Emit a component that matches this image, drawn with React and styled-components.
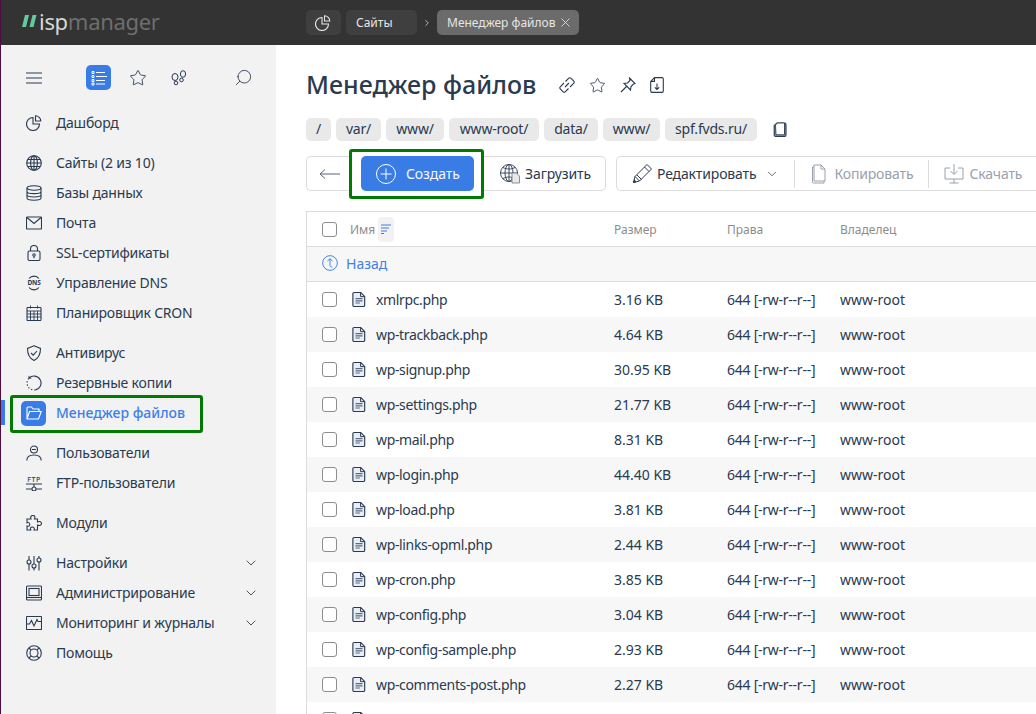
import React from 'react'
import styled, { createGlobalStyle } from 'styled-components'
import { ChevronDown, ChevronRight, X, Star, Search } from 'lucide-react'

const Global = createGlobalStyle`
  html, body { margin: 0; padding: 0; height: 100%; overflow: hidden; background: #fff; }
  body { font-family: "Noto Sans", "Open Sans", sans-serif; color: #2a3a50; }
`

const Page = styled.div`
  width: 1036px;
  height: 714px;
  overflow: hidden;
  display: flex;
  flex-direction: column;
  border-left: 1px solid #4c0f3c;
  box-sizing: border-box;
`

const Top = styled.header`
  height: 45px;
  flex: none;
  background: #333333;
  display: flex;
  align-items: center;
`

const Logo = styled.div`
  width: 305px;
  padding: 0 0 3px 21px;
  box-sizing: border-box;
  display: flex;
  align-items: center;
  gap: 2px;
  font-size: 22px;
  line-height: 1;
  letter-spacing: -0.3px;
  color: #d8d8d8;
  span { color: #6e6e6e; }
`

const TopTab = styled.div`
  height: 25px;
  border-radius: 5px;
  background: ${p => (p.$active ? '#6b6b6b' : '#3f3f3f')};
  color: #e6e6e6;
  font-size: 12px;
  white-space: nowrap;
  display: flex;
  align-items: center;
  justify-content: space-between;
  padding: 0 6px 0 10px;
  box-sizing: border-box;
  width: ${p => p.$w}px;
`

const Crumbs = styled.div`
  display: flex;
  align-items: center;
  gap: 5px;
  svg { flex: none; }
`

const CrumbArrow = styled.span`
  display: flex;
  color: #cfcfcf;
`

const Body = styled.div`
  flex: 1;
  display: flex;
  min-height: 0;
`

const Side = styled.aside`
  width: 275px;
  flex: none;
  background: #f2f2f2;
`

const SideTools = styled.div`
  height: 25px;
  margin-top: 20px;
  display: flex;
  align-items: center;
  color: #2a3a50;
  padding-left: 25px;
  svg { flex: none; }
`

const ToolCell = styled.div`
  width: ${p => p.$w}px;
  margin-left: ${p => p.$ml || 0}px;
  flex: none;
  display: flex;
  justify-content: center;
  align-items: center;
`

const ActiveTool = styled.div`
  width: 25px;
  height: 25px;
  margin-left: 44px;
  flex: none;
  border-radius: 5px;
  background: #3a7ce6;
  display: flex;
  align-items: center;
  justify-content: center;
`

const Nav = styled.nav`
  padding-top: 18px;
`

const NavGroup = styled.div`
  margin-bottom: 10px;
`

const NavRow = styled.div`
  height: 30px;
  display: flex;
  align-items: center;
  padding: 0 17px 0 25px;
  font-size: 14px;
  letter-spacing: ${p => (p.$active ? '0' : '-0.2px')};
  color: ${p => (p.$active ? '#3f7fe8' : '#2a3a50')};
  font-weight: ${p => (p.$active ? 500 : 400)};
  position: relative;
`

const NavLabel = styled.span`
  padding-bottom: 2px;
`

const NavIcon = styled.span`
  width: 16px;
  height: 16px;
  margin-right: 14px;
  flex: none;
  display: flex;
  align-items: center;
  justify-content: center;
`

const NavChevron = styled.span`
  margin-left: auto;
  display: flex;
  color: #2a3a50;
`

const ActiveBar = styled.span`
  position: absolute;
  left: 0;
  top: 2px;
  width: 4px;
  height: 25px;
  background: #3a7ce6;
`

const ActiveIcon = styled.span`
  width: 25px;
  height: 25px;
  border-radius: 5px;
  background: #3a7ce6;
  margin: 0 10px 0 -5px;
  flex: none;
  display: flex;
  align-items: center;
  justify-content: center;
`

const GreenBox = styled.span`
  position: absolute;
  left: 9px;
  top: -3px;
  width: 193px;
  height: 38px;
  border: 3px solid #007a00;
  border-radius: 3px;
  box-sizing: border-box;
`

const Main = styled.main`
  flex: 1;
  min-width: 0;
  padding: 0 0 0 30px;
  overflow: hidden;
`

const TitleRow = styled.div`
  height: 40px;
  margin-top: 20px;
  display: flex;
  align-items: center;
`

const Title = styled.h1`
  margin: 0 23px 3px 0;
  font-size: 25px;
  font-weight: 500;
  color: #2a3a50;
  white-space: nowrap;
`

const TitleIcons = styled.div`
  display: flex;
  gap: 14px;
  color: #2a3a50;
  align-items: center;
`

const Path = styled.div`
  display: flex;
  align-items: center;
  gap: 5px;
  margin-top: 13px;
  height: 23px;
`

const PathItem = styled.div`
  width: ${p => p.$w}px;
  height: 23px;
  box-sizing: border-box;
  padding-bottom: 2px;
  background: #e9e9e9;
  border-radius: 5px;
  font-size: 14px;
  letter-spacing: -0.2px;
  display: flex;
  align-items: center;
  justify-content: center;
  color: #2a3a50;
`

const CopyPath = styled.span`
  display: flex;
  margin-left: 11px;
`

const Toolbar = styled.div`
  margin-top: 15px;
  display: flex;
  height: 35px;
  align-items: center;
`

const Group = styled.div`
  border: 1px solid #dcdcdc;
  border-radius: 5px;
  height: 35px;
  box-sizing: border-box;
  display: flex;
  align-items: center;
  flex: none;
`

const BackBtn = styled(Group)`
  width: 50px;
  padding-left: 12px;
  border-right: none;
  border-radius: 5px 0 0 5px;
`

const Highlight = styled.div`
  width: 135px;
  height: 50px;
  box-sizing: border-box;
  border: 3px solid #007a00;
  border-radius: 3px;
  margin-left: -7px;
  padding-left: 9px;
  display: flex;
  align-items: center;
  flex: none;
  background: #fff;
`

const Primary = styled.div`
  width: 113px;
  height: 35px;
  border-radius: 5px;
  background: #3a7ce6;
  color: #f4f8ff;
  font-size: 14px;
  letter-spacing: -0.1px;
  display: flex;
  align-items: center;
  gap: 10px;
  padding-left: 15px;
  box-sizing: border-box;
`

const Upload = styled(Group)`
  width: 122px;
  padding-left: 16px;
  gap: 5px;
  font-size: 14px;
  letter-spacing: -0.1px;
  border-left: none;
  border-radius: 0 5px 5px 0;
`

const ActionGroup = styled(Group)`
  margin-left: 10px;
  flex: 1;
  border-right: none;
  border-radius: 5px 0 0 5px;
  font-size: 14px;
  letter-spacing: -0.15px;
  padding-left: 15px;
`

const Action = styled.div`
  display: flex;
  align-items: center;
  gap: ${p => p.$gap || 6}px;
  color: ${p => (p.$off ? '#9aa1ab' : '#2a3a50')};
  height: 100%;
`

const Sep = styled.div`
  width: 1px;
  height: 28px;
  background: #dcdcdc;
  margin: 0 ${p => p.$r || 15}px 0 ${p => p.$l || 15}px;
`

const Table = styled.div`
  margin-top: 20px;
  border-left: 1px solid #dcdcdc;
  border-top: 1px solid #dcdcdc;
`

const Columns = `
  display: grid;
  grid-template-columns: 307px 113px 113px 1fr;
  align-items: center;
`

const Head = styled.div`
  ${Columns}
  height: 34px;
  border-bottom: 1px solid #dcdcdc;
  font-size: 12px;
  color: #8d8d8d;
`

const NameHead = styled.div`
  display: flex;
  align-items: center;
  padding-left: 15px;
`

const SortBtn = styled.span`
  width: 16px;
  height: 25px;
  background: #f2f2f2;
  border-radius: 4px;
  display: flex;
  align-items: center;
  justify-content: center;
  margin-left: 3px;
`

const Check = styled.span`
  width: 15px;
  height: 15px;
  box-sizing: border-box;
  border: 1px solid #8d8d8d;
  border-radius: 3px;
  background: #fff;
  flex: none;
  margin-right: ${p => p.$mr}px;
`

const Back = styled.div`
  height: 32px;
  padding: 0 0 2px 15px;
  background: #f7f7f7;
  border-bottom: 1px solid #dcdcdc;
  display: flex;
  align-items: center;
  gap: 8px;
  font-size: 14px;
  color: #3f7fe8;
`

const Row = styled.div`
  ${Columns}
  height: 35px;
  font-size: 14px;
  background: ${p => (p.$alt ? '#f7f7f7' : '#fff')};
  color: #2a3a50;
`

const NameCell = styled.div`
  display: flex;
  align-items: center;
  padding-left: 15px;
  letter-spacing: -0.35px;
  svg { margin-right: 10px; flex: none; }
`

const PermCell = styled.div`
  letter-spacing: -0.25px;
`

const I = ({ children, s = 16 }) => (
  <svg width={s} height={s} viewBox="0 0 16 16" fill="none" stroke="currentColor" strokeWidth="1.1">{children}</svg>
)

const icons = {
  dash: <I><path d="M7 2.5a6.5 6.5 0 1 0 6.5 6.5H7z" /><path d="M9.5.8v5.2h5.3A5.3 5.3 0 0 0 9.500.8z" /></I>,
  globe: <I><circle cx="8" cy="8" r="7.3" /><ellipse cx="8" cy="8" rx="3.4" ry="7.3" /><path d="M8 .7v14.600M.7 8h14.600M1.800 4.500h12.400M1.800 11.500h12.400" /></I>,
  db: <I><ellipse cx="8" cy="3" rx="7" ry="2.2" /><path d="M1 3v10c0 1.200 3 2.200 7 2.200s7-1 7-2.200V3M1 6.400c0 1.200 3 2.200 7 2.200s7-1 7-2.200M1 9.800c0 1.200 3 2.200 7 2.200s7-1 7-2.200" /></I>,
  mail: <I><rect x="0.5" y="2" width="15" height="12" rx="0.8" /><path d="M1 2.500l7 6 7-6" /></I>,
  ssl: <I><rect x="2" y="6" width="12" height="9.500" rx="1.500" /><path d="M4.500 6V4a3.500 3.500 0 0 1 7 0v2" /><circle cx="8" cy="10" r="1.200" /><path d="M8 11.200v2" /></I>,
  dns: (
    <I>
      <path d="M3 3.500a6.500 6.500 0 0 1 10 0M3 12.500a6.500 6.500 0 0 0 10 0" />
      <text x="8" y="10.400" textAnchor="middle" fontSize="6.500" fontWeight="700" fill="currentColor" stroke="none" fontFamily="Noto Sans, sans-serif">DNS</text>
    </I>
  ),
  cron: <I><rect x="1" y="2.500" width="14" height="13" rx="0.8" /><path d="M1 6h14M4.500 0.500v3M11.500 0.500v3M1 9h14M1 12h14M4.500 6v9.500M8 6v9.500M11.500 6v9.500" strokeWidth="0.9" /></I>,
  shield: <I><path d="M8 .8l6.500 2.600c0 5-1 9.400-6.500 12-5.500-2.600-6.500-7-6.500-12z" /><path d="M5 8l2.200 2.200L11 6" /></I>,
  backup: <I><path d="M3 3.200A7 7 0 1 1 9.500 14.900" /><path d="M9.500 14.900A7 7 0 0 1 3 3.200" strokeDasharray="1.300 1.900" /><path d="M3 .9v2.300h2.300" strokeWidth="0.9" /></I>,
  folder: <svg width="16" height="14" viewBox="0 0 16 14" fill="none" stroke="#fff" strokeWidth="1.1"><path d="M1 13V2a1 1 0 0 1 1-1h3.500l1.500 2h6v2.500M1 13h11.500L15.200 5.500H3.500L1 13z" /></svg>,
  user: <I><circle cx="8" cy="4.500" r="3.500" /><path d="M6 4.500h4M.8 15.500c0-3.500 3-5.500 7.200-5.500s7.200 2 7.200 5.500" /></I>,
  ftp: (
    <I>
      <text x="8" y="6.500" textAnchor="middle" fontSize="7" fontWeight="500" letterSpacing="0.6" fill="currentColor" stroke="none" fontFamily="Noto Sans, sans-serif">FTP</text>
      <path d="M0 9h16M0 14h5.800M10.200 14H16M8 9v3" /><circle cx="8" cy="14" r="2" />
    </I>
  ),
  puzzle: <I><path d="M1 4h4c-1-2.500.5-3.500 2-3.500S9.500 1.500 8.500 4H11.500V7c2.300-1 4-.3 4 1.500s-1.700 2.500-4 1.500v5H8c.8-2-.3-3-1.800-3S4 13 4.800 15H1v-4c1.800.7 2.800-.3 2.800-1.500S2.800 7 1 7.800z" /></I>,
  sliders: <I><path d="M3 1v4M3 9v6.500M8 1v8M8 13v2.500M13 1v2M13 7v8.500" /><circle cx="3" cy="7" r="2" /><circle cx="8" cy="11" r="2" /><circle cx="13" cy="5" r="2" /></I>,
  admin: <I><rect x=".5" y="1" width="15" height="14" rx="1" /><rect x="3" y="3.500" width="10" height="7" /><path d="M.5 12.500h15" /></I>,
  monitor: <I><rect x=".5" y="1.500" width="15" height="13" rx=".5" /><path d="M1 9h2.500l2-3.500 2.500 5.500 3-6.500 1 2H15" /></I>,
  help: <I><circle cx="8" cy="8" r="7.300" /><circle cx="8" cy="8" r="4" /><path d="M3 3l2.200 2.200M13 3l-2.200 2.200M3 13l2.200-2.200M13 13l-2.200-2.200" /></I>,
}

const FileIcon = () => (
  <svg width="14" height="17" viewBox="0 0 16 18" fill="none">
    <path d="M2.500 1h7.500l4.500 4.500V15.500a1.500 1.500 0 0 1-1.500 1.500H2.500A1.500 1.500 0 0 1 1 15.500v-13A1.500 1.500 0 0 1 2.500 1z" fill="#e9eef6" stroke="#2a3a50" strokeWidth="1.300" />
    <path d="M9.800 1v4.700h4.700" stroke="#2a3a50" strokeWidth="1.100" />
    <path d="M4 8h8M4 10.500h8M4 13h5" stroke="#5a6a80" strokeWidth="1.300" />
  </svg>
)

const files = [
  ['xmlrpc.php', '3.16 KB'],
  ['wp-trackback.php', '4.64 KB'],
  ['wp-signup.php', '30.95 KB'],
  ['wp-settings.php', '21.77 KB'],
  ['wp-mail.php', '8.31 KB'],
  ['wp-login.php', '44.40 KB'],
  ['wp-load.php', '3.81 KB'],
  ['wp-links-opml.php', '2.44 KB'],
  ['wp-cron.php', '3.85 KB'],
  ['wp-config.php', '3.04 KB'],
  ['wp-config-sample.php', '2.93 KB'],
  ['wp-comments-post.php', '2.27 KB'],
  ['wp-blog-header.php', '405 B'],
]

const pathParts = [['/', 25], ['var/', 45], ['www/', 58], ['www-root/', 90], ['data/', 54], ['www/', 57], ['spf.fvds.ru/', 92]]

const navGroups = [
  [['Дашборд', icons.dash]],
  [
    ['Сайты (2 из 10)', icons.globe],
    ['Базы данных', icons.db],
    ['Почта', icons.mail],
    ['SSL-сертификаты', icons.ssl],
    ['Управление DNS', icons.dns],
    ['Планировщик CRON', icons.cron],
  ],
  [
    ['Антивирус', icons.shield],
    ['Резервные копии', icons.backup],
    ['Менеджер файлов', icons.folder, 'active'],
  ],
  [
    ['Пользователи', icons.user],
    ['FTP-пользователи', icons.ftp],
  ],
  [['Модули', icons.puzzle]],
  [
    ['Настройки', icons.sliders, 'more'],
    ['Администрирование', icons.admin, 'more'],
    ['Мониторинг и журналы', icons.monitor, 'more'],
    ['Помощь', icons.help],
  ],
]

export default function App() {
  return (
    <Page>
      <Global />
      <Top>
        <Logo>
          <svg width="15" height="12" viewBox="0 0 15 12" fill="#62c9a0"><path d="M3 0h4L4 12H0zM10.500 0H14.500l-3 12H7.500z" /></svg>
          <div>isp<span>manager</span></div>
        </Logo>
        <Crumbs>
          <TopTab $w={35}>
            <svg width="16" height="16" viewBox="0 0 16 16" fill="none" stroke="#e6e6e6" strokeWidth="1.100" style={{ marginLeft: -1 }}><path d="M7 2.500a6.500 6.500 0 1 0 6.500 6.500H7z" /><path d="M9.500.8v5.200h5.300A5.300 5.300 0 0 0 9.500.8z" /></svg>
          </TopTab>
          <TopTab $w={71}>Сайты</TopTab>
          <CrumbArrow><ChevronRight size={10} strokeWidth={2} /></CrumbArrow>
          <TopTab $active $w={142}>Менеджер файлов <X size={15} strokeWidth={1.500} color="#d8d8d8" /></TopTab>
        </Crumbs>
      </Top>
      <Body>
        <Side>
          <SideTools>
            <svg width="16" height="12" viewBox="0 0 16 12" fill="none" stroke="currentColor" strokeWidth="1"><path d="M0 1h16M0 6h16M0 11h16" /></svg>
            <ActiveTool>
              <svg width="16" height="16" viewBox="0 0 16 16" fill="none" stroke="#fff" strokeWidth="1"><path d="M5 2.500h9M5 6.500h11M5 10.500h9M5 14h9M1 1.500h2v2H1zM1 5.500h2v2H1zM1 9.500h2v2H1zM1 13h2v2H1z" /></svg>
            </ActiveTool>
            <ToolCell $w={54}><Star size={18} strokeWidth={1.200} /></ToolCell>
            <ToolCell $w={28}>
              <svg width="16" height="16" viewBox="0 0 16 16" fill="none" stroke="currentColor" strokeWidth="1"><ellipse cx="4" cy="7" rx="3" ry="3.500" /><circle cx="5" cy="13" r="1.800" /><ellipse cx="12" cy="4" rx="2.600" ry="3.300" /><circle cx="10.500" cy="10" r="1.800" /></svg>
            </ToolCell>
            <ToolCell $w={30} $ml={35}>
              <Search size={19} strokeWidth={1.100} style={{ transform: 'scaleX(-1)' }} />
            </ToolCell>
          </SideTools>
          <Nav>
            {navGroups.map((g, i) => (
              <NavGroup key={i}>
                {g.map(([label, icon, kind]) => (
                  <NavRow key={label} $active={kind === 'active'}>
                    {kind === 'active' ? (
                      <>
                        <ActiveBar />
                        <GreenBox />
                        <ActiveIcon>{icon}</ActiveIcon>
                      </>
                    ) : (
                      <NavIcon>{icon}</NavIcon>
                    )}
                    <NavLabel>{label}</NavLabel>
                    {kind === 'more' && <NavChevron><ChevronDown size={16} strokeWidth={1.300} /></NavChevron>}
                  </NavRow>
                ))}
              </NavGroup>
            ))}
          </Nav>
        </Side>
        <Main>
          <TitleRow>
            <Title>Менеджер файлов</Title>
            <TitleIcons>
              <svg width="16" height="16" viewBox="0 0 16 16" fill="none" stroke="currentColor" strokeWidth="1.100"><path d="M6.500 4.500L9.800 1.200a1.400 1.400 0 0 1 2 0l3 3a1.400 1.400 0 0 1 0 2L11 10M9.500 11.500L6.200 14.800a1.400 1.400 0 0 1-2 0l-3-3a1.400 1.400 0 0 1 0-2L5 6M6 10l4-4" /></svg>
              <Star size={17} strokeWidth={1.200} />
              <svg width="16" height="16" viewBox="0 0 16 16" fill="none" stroke="currentColor" strokeWidth="1.100"><path d="M9.500 1l5.500 5.500-1.500.5-2.500 2.500-.5 3.500-6.500-6.500 3.500-.5L10 3.500zM6.500 9.500L1 15" /></svg>
              <svg width="14" height="16" viewBox="0 0 14 16" fill="none" stroke="currentColor" strokeWidth="1.100"><path d="M4.500.6h7.500a1.300 1.300 0 0 1 1.300 1.300v12.200a1.300 1.300 0 0 1-1.300 1.300H2a1.300 1.300 0 0 1-1.300-1.300V4.400zM4.500.6v3.800H.7M7 6.500v6M4.800 10.300L7 12.500l2.200-2.200" /></svg>
            </TitleIcons>
          </TitleRow>
          <Path>
            {pathParts.map(([p, w], i) => (
              <PathItem key={i} $w={w}>{p}</PathItem>
            ))}
            <CopyPath>
              <svg width="14" height="16" viewBox="0 0 14 16" fill="none" stroke="#2a3a50" strokeWidth="1.100"><path d="M3 14.500h8.500a1.500 1.500 0 0 0 1.500-1.500V2.500A1.500 1.500 0 0 0 11.500 1H4L1.200 3.500V13A1.500 1.500 0 0 0 3 14.500z" fill="#8d96a3" /><path d="M3 12.800h8.500V1H4L2.500 3.200z" fill="#fff" strokeWidth="0.9" /></svg>
            </CopyPath>
          </Path>
          <Toolbar>
            <BackBtn>
              <svg width="22" height="12" viewBox="0 0 22 12" fill="none" stroke="#5a6573" strokeWidth="1"><path d="M1 6h20M6 1.500L1 6l5 4.500" /></svg>
            </BackBtn>
            <Highlight>
              <Primary>
                <svg width="20" height="20" viewBox="0 0 20 20" fill="none" stroke="#fff" strokeWidth="1"><circle cx="10" cy="10" r="9.500" /><path d="M10 4.500v11M4.500 10h11" /></svg>
                Создать
              </Primary>
            </Highlight>
            <Upload>
              <svg width="20" height="20" viewBox="0 0 20 20" fill="none" stroke="#2a3a50" strokeWidth="0.9"><circle cx="9" cy="9" r="8.500" /><path d="M.5 9h17M9 .5v17M3 3.500c3.500 2 8.500 2 12 0M3 14.500c3.500-2 8.500-2 12 0" /><ellipse cx="9" cy="9" rx="4" ry="8.500" /><path d="M12 9h4.500l3 3v7h-7.500z" fill="#e8e8e8" stroke="#7c8694" /></svg>
              Загрузить
            </Upload>
            <ActionGroup>
              <Action $gap={4}>
                <svg width="21" height="21" viewBox="0 0 21 21" fill="none" stroke="#2a3a50" strokeWidth="1"><path d="M15 1.500l4.500 4.500L7.500 18 3 13.500zM12.500 4l4.500 4.500M5 12l4.500 4.500M3 13.500l-1.500 6 6-1.500" /><path d="M1.500 19.500l2.500-.8-1.700-1.700z" fill="#2a3a50" /></svg>
                Редактировать
                <ChevronDown size={14} strokeWidth={1.300} style={{ marginLeft: 5 }} />
              </Action>
              <Sep $l={15} $r={16} />
              <Action $off $gap={6}>
                <svg width="17" height="20" viewBox="0 0 17 20" fill="none" stroke="#9aa1ab" strokeWidth="1"><path d="M3 1h7l4 4v12H3zM3 3H1.500v15a1 1 0 0 0 1 1H13v-2M10 1v4h4" /></svg>
                Копировать
              </Action>
              <Sep />
              <Action $off $gap={5}>
                <svg width="20" height="20" viewBox="0 0 20 20" fill="none" stroke="#9aa1ab" strokeWidth="1"><path d="M6 4H1v11h18V4h-5M10 0v10M6.500 7l3.500 3.500L13.500 7M10 15v4M5.500 19h9" /></svg>
                Скачать
              </Action>
            </ActionGroup>
          </Toolbar>
          <Table>
            <Head>
              <NameHead>
                <Check $mr={13} />
                Имя
                <SortBtn>
                  <svg width="12" height="10" viewBox="0 0 12 10" fill="none" stroke="#3a7ce6" strokeWidth="1"><path d="M1 1h10M1 4h8M1 7h6M1 9.500h3" /></svg>
                </SortBtn>
              </NameHead>
              <div>Размер</div>
              <div>Права</div>
              <div>Владелец</div>
            </Head>
            <Back>
              <svg width="16" height="16" viewBox="0 0 17 17" fill="none" stroke="#3a7ce6" strokeWidth="1"><circle cx="8.500" cy="8.500" r="7.800" /><path d="M5.800 6.500L8.500 4v7c0 1.200.8 1.800 2.500 1.800M8.500 4l2.700 2.500" /></svg>
              Назад
            </Back>
            {files.map(([name, size], i) => (
              <Row key={name} $alt={i % 2 === 1}>
                <NameCell>
                  <Check $mr={15} />
                  <FileIcon />
                  {name}
                </NameCell>
                <div>{size}</div>
                <PermCell>644 [-rw-r--r--]</PermCell>
                <div>www-root</div>
              </Row>
            ))}
          </Table>
        </Main>
      </Body>
    </Page>
  )
}
